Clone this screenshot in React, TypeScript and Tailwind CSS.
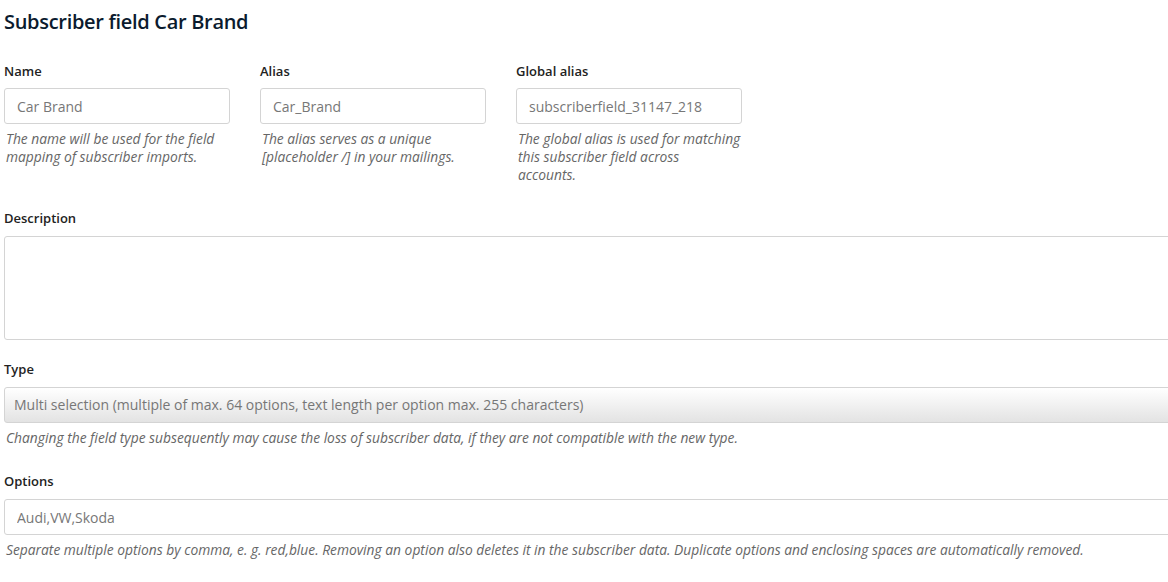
import React from 'react';

const font = { fontFamily: '"Open Sans", "Liberation Sans", sans-serif' };

function Field({ label, value, help, width }: { label: string; value: string; help: React.ReactNode; width: string }) {
  return (
    <div className={`${width} mb-5`}>
      <label className="block text-[13px] font-semibold leading-[18px] text-[#222] mb-2">{label}</label>
      <input
        readOnly
        value={value}
        className="w-full h-9 px-3 border border-[#d4d4d4] rounded-[3px] text-sm text-[#777] outline-none bg-white"
      />
      <p className="mt-1.5 mb-[5px] pl-[2px] text-[13.8px] leading-[18px] italic text-[#666]">{help}</p>
    </div>
  );
}

export default function App() {
  return (
    <div className="bg-white min-h-screen pl-1 overflow-hidden" style={font}>
      <h1 className="text-[20px] tracking-[-0.3px] font-semibold text-[#0b1b2e] leading-[28px] pt-[8px] mb-[26px]">
        Subscriber field Car Brand
      </h1>

      {/* first row */}
      <div className="flex gap-[30px]">
        <Field
          width="w-[226px]"
          label="Name"
          value="Car Brand"
          help="The name will be used for the field mapping of subscriber imports."
        />
        <Field
          width="w-[226px]"
          label="Alias"
          value="Car_Brand"
          help="The alias serves as a unique [placeholder /] in your mailings."
        />
        <Field
          width="w-[226px]"
          label="Global alias"
          value="subscriberfield_31147_218"
          help={
            <>
              The global alias is used for matching this subscriber field across
              <br />
              accounts.
            </>
          }
        />
      </div>

      <div className="mb-5 w-[1200px]">
        <label className="block text-[13px] font-semibold leading-[18px] text-[#222] mb-[9px]">Description</label>
        <textarea readOnly className="block w-full h-[104px] border border-[#d4d4d4] rounded-[3px] resize-none outline-none" />
      </div>

      <div className="w-[1200px]">
        <label className="block text-[13px] font-semibold leading-[18px] text-[#222] mb-[9px]">Type</label>
        <div className="h-9 px-[9px] flex items-center border border-[#d4d4d4] rounded-[3px] bg-gradient-to-b from-white to-[#e3e3e3] text-sm text-[#777]">
          Multi selection (multiple of max. 64 options, text length per option max. 255 characters)
        </div>
        <p className="mt-1.5 mb-[25px] pl-[2px] text-[13.8px] leading-[18px] italic text-[#666]">
          Changing the field type subsequently may cause the loss of subscriber data, if they are not compatible with the new type.
        </p>
      </div>

      <div className="w-[1200px]">
        <label className="block text-[13px] font-semibold leading-[18px] text-[#222] mb-[9px]">Options</label>
        <input
          readOnly
          value="Audi,VW,Skoda"
          className="w-full h-9 px-3 border border-[#d4d4d4] rounded-[3px] text-sm text-[#777] outline-none bg-white"
        />
        <p className="mt-1.5 pl-[2px] text-[13.8px] leading-[18px] italic text-[#666]">
          Separate multiple options by comma, e. g. red,blue. Removing an option also deletes it in the subscriber data. Duplicate options and enclosing spaces are automatically removed.
        </p>
      </div>
    </div>
  );
}
